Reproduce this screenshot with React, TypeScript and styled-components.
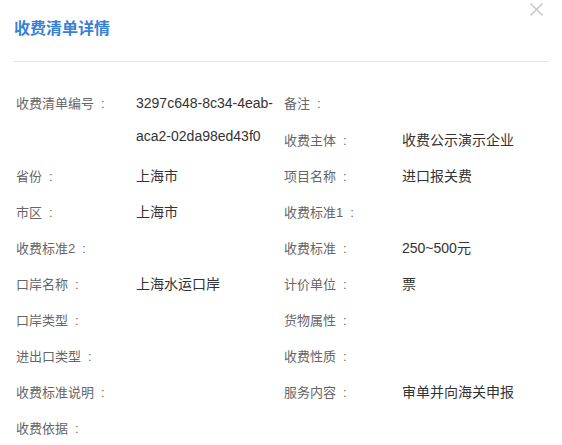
import React from "react";
import styled, { createGlobalStyle } from "styled-components";

const GlobalStyle = createGlobalStyle`
  html, body {
    margin: 0;
    padding: 0;
    background: #fff;
  }
  body {
    font-family: "Liberation Sans", "Noto Sans CJK SC", sans-serif;
    overflow: hidden;
  }
`;

const Modal = styled.div`
  position: relative;
  width: 562px;
  height: 445px;
  background: #fff;
  overflow: hidden;
`;

const Header = styled.div`
  margin: 0 13px;
  height: 62px;
  padding: 15px 0 0 1px;
  box-sizing: border-box;
  border-bottom: 1px solid #e6e6e6;
`;

const Title = styled.h3`
  margin: 0;
  font-size: 16px;
  line-height: 24px;
  font-weight: bold;
  color: #3a80d5;
  font-family: "Noto Sans CJK SC", sans-serif;
`;

const CloseButton = styled.button`
  position: absolute;
  top: 2px;
  right: 18px;
  width: 15px;
  height: 15px;
  padding: 0;
  border: none;
  background: none;
  cursor: pointer;
`;

const DetailGrid = styled.div`
  display: grid;
  grid-template-columns: 268px 1fr;
  grid-template-rows: 37px;
  grid-auto-rows: 36px;
  margin-top: 23px;
  padding-left: 16px;
`;

const Field = styled.div<{ $span?: number }>`
  display: flex;
  grid-row: ${p => (p.$span ? `span ${p.$span}` : "auto")};
  padding-top: 2px;
  line-height: 33px;
`;

const Label = styled.span<{ $width: number }>`
  flex: none;
  width: ${p => p.$width}px;
  font-size: 13px;
  color: #666;
  white-space: nowrap;
`;

const Colon = styled.span`
  margin-left: 7px;
`;

const Value = styled.span`
  flex: 1;
  min-width: 0;
  font-size: 14px;
  color: #333;
`;

const Empty = styled.div``;

type Item = { label: string; value?: string; span?: number } | null;

// 按行排列：左列 / 右列
const rows: [Item, Item][] = [
  [{ label: "收费清单编号", value: "3297c648-8c34-4eab-aca2-02da98ed43f0", span: 2 }, { label: "备注" }],
  [null, { label: "收费主体", value: "收费公示演示企业" }],
  [{ label: "省份", value: "上海市" }, { label: "项目名称", value: "进口报关费" }],
  [{ label: "市区", value: "上海市" }, { label: "收费标准1" }],
  [{ label: "收费标准2" }, { label: "收费标准", value: "250~500元" }],
  [{ label: "口岸名称", value: "上海水运口岸" }, { label: "计价单位", value: "票" }],
  [{ label: "口岸类型" }, { label: "货物属性" }],
  [{ label: "进出口类型" }, { label: "收费性质" }],
  [{ label: "收费标准说明" }, { label: "服务内容", value: "审单并向海关申报" }],
  [{ label: "收费依据" }, null],
];

const renderField = (item: Item, labelWidth: number, key: string, skip: boolean) => {
  if (skip) return null;
  if (!item) return <Empty key={key} />;
  return (
    <Field key={key} $span={item.span}>
      <Label $width={labelWidth}>
        {item.label}
        <Colon>:</Colon>
      </Label>
      <Value>{item.value}</Value>
    </Field>
  );
};

const App: React.FC = () => {
  return (
    <Modal>
      <GlobalStyle />
      <Header>
        <Title>收费清单详情</Title>
      </Header>
      <CloseButton aria-label="关闭">
        <svg width="15" height="15" viewBox="0 0 15 15">
          <path d="M1.5 1.5 L13.5 13.5 M13.5 1.5 L1.5 13.5" stroke="#c9c9c9" strokeWidth="1.6" />
        </svg>
      </CloseButton>
      <DetailGrid>
        {rows.map(([left, right], i) => (
          <React.Fragment key={i}>
            {renderField(left, 120, `l${i}`, i === 1)}
            {renderField(right, 118, `r${i}`, false)}
          </React.Fragment>
        ))}
      </DetailGrid>
    </Modal>
  );
};

export default App;
